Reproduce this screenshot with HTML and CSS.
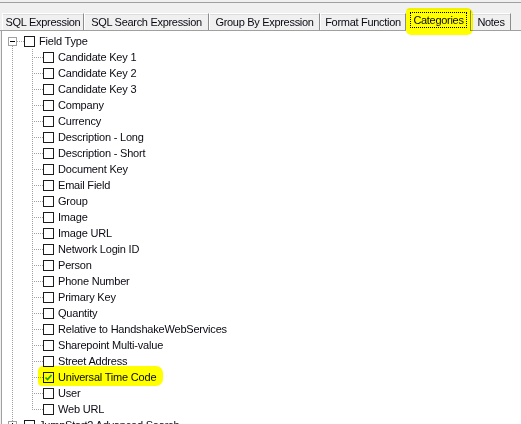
FILE: index.html
```html
<!DOCTYPE html>
<html>
<head>
<meta charset="utf-8">
<link rel="stylesheet" href="styles.css">
</head>
<body>
<div class="window">
  <div class="topline"></div>
  <div class="tabstrip">
    <div class="tab w1">SQL Expression</div>
    <div class="tab w2">SQL Search Expression</div>
    <div class="tab w3">Group By Expression</div>
    <div class="tab w4">Format Function</div>
    <div class="tab w5 selected"><span class="focus">Categories</span></div>
    <div class="tab w6">Notes</div>
  </div>
  <div class="panel">
    <ul class="tree">
      <li class="node">
        <div class="row top"><span class="exp"><span class="minus"></span></span><span class="hline h-top"></span><span class="cb"></span><span class="label">Field Type</span></div>
        <ul class="children">
          <li class="row child"><span class="hline h-child"></span><span class="cb"></span><span class="label">Candidate Key 1</span></li>
          <li class="row child"><span class="hline h-child"></span><span class="cb"></span><span class="label">Candidate Key 2</span></li>
          <li class="row child"><span class="hline h-child"></span><span class="cb"></span><span class="label">Candidate Key 3</span></li>
          <li class="row child"><span class="hline h-child"></span><span class="cb"></span><span class="label">Company</span></li>
          <li class="row child"><span class="hline h-child"></span><span class="cb"></span><span class="label">Currency</span></li>
          <li class="row child"><span class="hline h-child"></span><span class="cb"></span><span class="label">Description - Long</span></li>
          <li class="row child"><span class="hline h-child"></span><span class="cb"></span><span class="label">Description - Short</span></li>
          <li class="row child"><span class="hline h-child"></span><span class="cb"></span><span class="label">Document Key</span></li>
          <li class="row child"><span class="hline h-child"></span><span class="cb"></span><span class="label">Email Field</span></li>
          <li class="row child"><span class="hline h-child"></span><span class="cb"></span><span class="label">Group</span></li>
          <li class="row child"><span class="hline h-child"></span><span class="cb"></span><span class="label">Image</span></li>
          <li class="row child"><span class="hline h-child"></span><span class="cb"></span><span class="label">Image URL</span></li>
          <li class="row child"><span class="hline h-child"></span><span class="cb"></span><span class="label">Network Login ID</span></li>
          <li class="row child"><span class="hline h-child"></span><span class="cb"></span><span class="label">Person</span></li>
          <li class="row child"><span class="hline h-child"></span><span class="cb"></span><span class="label">Phone Number</span></li>
          <li class="row child"><span class="hline h-child"></span><span class="cb"></span><span class="label">Primary Key</span></li>
          <li class="row child"><span class="hline h-child"></span><span class="cb"></span><span class="label">Quantity</span></li>
          <li class="row child"><span class="hline h-child"></span><span class="cb"></span><span class="label">Relative to HandshakeWebServices</span></li>
          <li class="row child"><span class="hline h-child"></span><span class="cb"></span><span class="label">Sharepoint Multi-value</span></li>
          <li class="row child"><span class="hline h-child"></span><span class="cb"></span><span class="label">Street Address</span></li>
          <li class="row child marked"><span class="hline h-child"></span><span class="cb checked"><svg width="9" height="9" viewBox="0 0 9 9"><path d="M1.5 4.5 L3.5 6.5 L7.5 2" fill="none" stroke="#16a316" stroke-width="1.6"/></svg></span><span class="label">Universal Time Code</span></li>
          <li class="row child"><span class="hline h-child"></span><span class="cb"></span><span class="label">User</span></li>
          <li class="row child"><span class="hline h-child"></span><span class="cb"></span><span class="label">Web URL</span></li>
        </ul>
      </li>
      <li class="node">
        <div class="row top"><span class="exp"><span class="minus"></span><span class="plusv"></span></span><span class="hline h-top"></span><span class="cb"></span><span class="label">JumpStart2 Advanced Search</span></div>
      </li>
    </ul>
  </div>
</div>
</body>
</html>
```

FILE: styles.css
```css
html, body {
  margin: 0;
  padding: 0;
  background: #f0f0f0;
  overflow: hidden;
}
.window {
  width: 521px;
  height: 424px;
  overflow: hidden;
  font-family: "Liberation Sans", Arial, sans-serif;
  font-size: 11px;
  letter-spacing: -0.2px;
  color: #0a0a14;
  background: #f0f0f0;
}
.topline {
  height: 2px;
  border-bottom: 1px solid #a0a0a0;
}
.tabstrip {
  display: flex;
  align-items: flex-end;
  height: 27px;
  padding-left: 2px;
  border-bottom: 1px solid #a0a0a0;
}
.tab {
  box-sizing: border-box;
  height: 17px;
  padding-top: 1px;
  line-height: 15px;
  text-align: center;
  white-space: nowrap;
  letter-spacing: -0.3px;
  background: #f0f0f0;
  border-top: 1px solid #fff;
  border-left: 1px solid #fff;
  border-right: 1px solid #8c8c8c;
  box-shadow: inset 0 1px 0 #dcdcdc;
}
.w1 { width: 82px; }
.w2 { width: 125px; }
.w3 { width: 111px; }
.w4 { width: 86px; }
.w5 { width: 65px; }
.w6 { width: 40px; }
.tab.selected {
  position: relative;
  height: 21px;
  margin-bottom: -1px;
  padding-top: 1px;
  line-height: 16px;
  background: #fff;
  box-shadow: none;
}
.tab.selected::after {
  content: "";
  position: absolute;
  left: -1px;
  right: -3px;
  top: -3px;
  bottom: -4px;
  background: #ffff00;
  border-radius: 4px 6px 6px 5px;
  mix-blend-mode: multiply;
}
.focus {
  display: inline-block;
  border: 1px dotted #000;
  padding: 0 2px;
  line-height: 14px;
}
.panel {
  margin-left: 1px;
  border-left: 1px solid #a0a0a0;
  background: #fff;
  height: 400px;
}
.tree {
  list-style: none;
  margin: 0;
  padding: 2px 0 0 0;
  background-image: repeating-linear-gradient(to bottom, #a0a0a0 0 1px, transparent 1px 2px);
  background-repeat: no-repeat;
  background-position: 10px 15px;
  background-size: 1px 100%;
}
.node {
  margin: 0;
  padding: 0;
}
.row {
  display: flex;
  align-items: center;
  height: 16px;
  white-space: nowrap;
}
.row.top {
  padding-left: 6px;
}
.exp {
  position: relative;
  box-sizing: border-box;
  width: 9px;
  height: 9px;
  border: 1px solid #a0a0a0;
  background: #fff;
  display: flex;
  align-items: center;
  justify-content: center;
}
.minus {
  width: 5px;
  height: 1px;
  background: #000;
}
.plusv {
  position: absolute;
  left: 3px;
  top: 1px;
  width: 1px;
  height: 5px;
  background: #000;
}
.hline {
  height: 1px;
  background-image: repeating-linear-gradient(to right, #a0a0a0 0 1px, transparent 1px 2px);
}
.h-top { width: 7px; }
.h-child { width: 11px; }
.cb {
  box-sizing: border-box;
  width: 11px;
  height: 11px;
  border: 1px solid #1c1c1c;
  background: #fff;
  display: flex;
  align-items: center;
  justify-content: center;
  flex: none;
}
.label {
  margin-left: 4px;
  line-height: 16px;
}
.children {
  list-style: none;
  margin: 0;
  padding: 0;
  background-image: repeating-linear-gradient(to bottom, #a0a0a0 0 1px, transparent 1px 2px);
  background-repeat: no-repeat;
  background-position: 30px 0;
  background-size: 1px calc(100% - 8px);
}
.row.child {
  padding-left: 30px;
}
.row.marked {
  position: relative;
}
.row.marked::after {
  content: "";
  position: absolute;
  left: 36px;
  width: 125px;
  top: -3px;
  height: 20px;
  background: #ffff00;
  border-radius: 5px 7px 7px 4px;
  mix-blend-mode: multiply;
}
```
